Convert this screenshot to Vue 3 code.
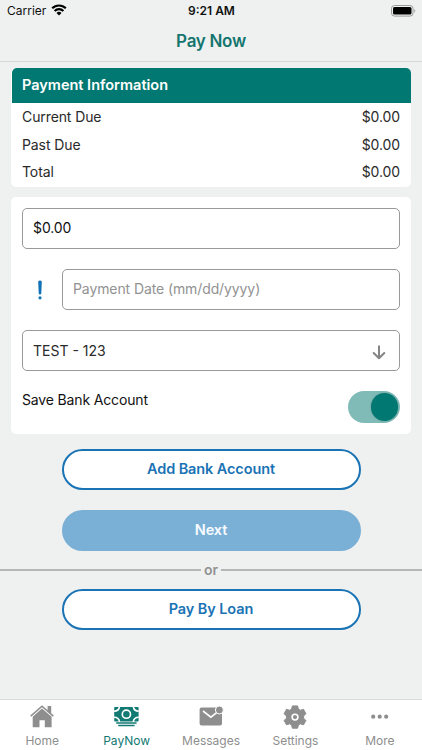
<template>
  <div class="screen">
    <div class="status-bar">
      <div class="carrier">
        <span>Carrier</span>
        <svg class="wifi" viewBox="0 0 16 12">
          <path d="M1.2 4.3a9.6 9.6 0 0 1 13.6 0" />
          <path d="M3.6 6.9a6.2 6.2 0 0 1 8.8 0" />
          <path class="wifi-dot" d="M8 11.5 5.5 8.9a3.6 3.6 0 0 1 5 0z" />
        </svg>
      </div>
      <span class="clock">9:21 AM</span>
      <svg class="battery" viewBox="0 0 25 12">
        <rect class="battery-case" x=".5" y=".5" width="21.5" height="10.6" rx="3" />
        <rect x="2" y="2" width="18.5" height="7.6" rx="1.5" />
        <path class="battery-tip" d="M23.3 4v3.7c1.3-.5 1.3-3.2 0-3.7z" />
      </svg>
    </div>

    <header class="title-bar">
      <h1>Pay Now</h1>
    </header>

    <main class="content">
      <section class="card summary">
        <h2>Payment Information</h2>
        <div v-for="item in summary" :key="item.label" class="summary-row">
          <span>{{ item.label }}</span>
          <span>{{ item.amount }}</span>
        </div>
      </section>

      <section class="card form">
        <input v-model="amount" class="field" type="text" />
        <div class="date-row">
          <svg class="alert" viewBox="0 0 6 20">
            <path d="M1.2 2A1.5 1.5 0 0 1 2.7.4h.6A1.5 1.5 0 0 1 4.8 2l-.5 11.2a1.3 1.3 0 0 1-2.6 0z" />
            <circle cx="3" cy="17.8" r="1.6" />
          </svg>
          <input v-model="date" class="field" type="text" placeholder="Payment Date (mm/dd/yyyy)" />
        </div>
        <button type="button" class="field account">
          <span>TEST - 123</span>
          <svg class="arrow" viewBox="0 0 14 15">
            <path d="M7 1.2v12M1.7 8 7 13.3 12.3 8" />
          </svg>
        </button>
        <div class="save-row">
          <span>Save Bank Account</span>
          <button type="button" class="toggle" :class="{ on: saveAccount }" @click="saveAccount = !saveAccount">
            <span class="knob"></span>
          </button>
        </div>
      </section>

      <div class="actions">
        <button type="button" class="btn">Add Bank Account</button>
        <button type="button" class="btn btn-next">Next</button>
        <div class="divider"><span>or</span></div>
        <button type="button" class="btn">Pay By Loan</button>
      </div>
    </main>

    <nav class="tab-bar">
      <button v-for="tab in tabs" :key="tab" type="button" class="tab" :class="{ active: tab === current }" @click="current = tab">
        <svg v-if="tab === 'Home'" class="tab-icon" viewBox="0 0 26 26">
          <path d="M13 5.5 22.6 13.8v10.5h-6.8v-7h-5.3v7H3.7V13.8z" />
          <path class="line" d="M1.7 13.2 13 3.2l11.3 10" />
          <path d="M18.6 2.9h3.6v8l-3.6-3z" />
        </svg>
        <svg v-else-if="tab === 'PayNow'" class="tab-icon" viewBox="0 0 26 26">
          <rect x=".2" y="3.9" width="24.4" height="14.6" rx=".8" />
          <circle class="cut" cx="12.4" cy="11.2" r="4.1" />
          <path class="cut" d="M0 8.2c3.1 0 5.2-1.6 5.5-4.8M24.8 8.2c-3.1 0-5.2-1.6-5.5-4.8M0 14.2c3.1 0 5.2 1.6 5.5 4.8M24.8 14.2c-3.1 0-5.2 1.6-5.5 4.8" />
          <path class="thin" d="M2.2 20h20.4M4.2 22.4h16.4" />
        </svg>
        <svg v-else-if="tab === 'Messages'" class="tab-icon" viewBox="0 0 26 26">
          <rect x="1.6" y="4.6" width="22.4" height="17.8" rx="2" />
          <path class="cut" d="m5 8 7.9 6.2 6.1-4.8" />
          <circle class="badge" cx="21.4" cy="7" r="4" />
        </svg>
        <svg v-else-if="tab === 'Settings'" class="tab-icon" viewBox="0 0 26 26">
          <path class="gear" d="M10.4 2.9h5.2l.8 3.2 2 1.2 3.1-1 2.4 4.4-2.3 2.3v2.2l2.3 2.3-2.4 4.3-3.1-1-2 1.3-.8 3.1h-5.2l-.8-3.1-2-1.3-3.1 1-2.4-4.3 2.3-2.3V13l-2.3-2.3 2.4-4.4 3.1 1 2-1.2z" />
          <circle class="cut" cx="13" cy="14.1" r="2.9" />
        </svg>
        <svg v-else class="tab-icon" viewBox="0 0 26 26">
          <circle cx="6.2" cy="13.7" r="2.1" />
          <circle cx="12.7" cy="13.7" r="2.1" />
          <circle cx="19.2" cy="13.7" r="2.1" />
        </svg>
        <span>{{ tab }}</span>
      </button>
    </nav>
  </div>
</template>

<script setup>
import { ref } from "vue";

const summary = [
  { label: "Current Due", amount: "$0.00" },
  { label: "Past Due", amount: "$0.00" },
  { label: "Total", amount: "$0.00" },
];
const tabs = ["Home", "PayNow", "Messages", "Settings", "More"];

const amount = ref("$0.00");
const date = ref("");
const saveAccount = ref(true);
const current = ref("PayNow");
</script>

<style>
body {
  margin: 0;
  background: #eff1f1;
}
</style>

<style scoped>
.screen {
  display: flex;
  flex-direction: column;
  width: 422px;
  height: 750px;
  overflow: hidden;
  background: #eff1f1;
  color: #2a2a2a;
  font-family: Inter, "Liberation Sans", sans-serif;
  font-size: 14px;
  letter-spacing: -.1px;
}

.screen * {
  box-sizing: border-box;
}

button,
input {
  margin: 0;
  padding: 0;
  border: 0;
  background: none;
  font: inherit;
  letter-spacing: inherit;
  color: inherit;
}

.status-bar {
  display: grid;
  grid-template-columns: 1fr auto 1fr;
  align-items: center;
  height: 22px;
  padding: 0 6px 1px 7px;
  color: #111;
  font-size: 12px;
  letter-spacing: 0;
}

.carrier {
  display: flex;
  align-items: center;
  gap: 5px;
}

.wifi {
  width: 16px;
  height: 12px;
  margin-top: -1px;
  fill: none;
  stroke: #000;
  stroke-width: 2.2;
}

.wifi-dot {
  fill: #000;
  stroke: none;
}

.clock {
  font-weight: 600;
}

.battery {
  justify-self: end;
  width: 25px;
  height: 12px;
}

.battery-case {
  fill: none;
  stroke: #999;
}

.battery-tip {
  fill: #999;
}

.title-bar {
  display: flex;
  align-items: center;
  justify-content: center;
  height: 40px;
  padding-bottom: 1px;
  border-bottom: 1px solid #d6d8d8;
}

h1 {
  margin: 0;
  color: #14766f;
  font-size: 17px;
  font-weight: 600;
  letter-spacing: -.3px;
}

.content {
  flex: 1;
  padding: 5.5px 11px 0;
}

.card {
  border-radius: 5px;
  background: #fff;
}

.summary {
  height: 119px;
  margin-bottom: 10.5px;
}

h2 {
  display: flex;
  align-items: center;
  height: 35.5px;
  margin: 0 0 0 .5px;
  padding: 0 0 2px 10.5px;
  border-radius: 5px 5px 0 0;
  background: #027872;
  color: #fff;
  font-size: 14.5px;
  font-weight: 600;
  letter-spacing: 0;
}

.summary-row {
  display: flex;
  align-items: center;
  justify-content: space-between;
  height: 27.5px;
  padding: 0 11px;
}

.form {
  display: flex;
  flex-direction: column;
  gap: 20px;
  height: 237px;
  padding: 11px;
}

.field {
  flex: none;
  width: 100%;
  height: 41px;
  padding: 0 10px 2px;
  border: 1px solid #999;
  border-radius: 5px;
  color: #111;
}

.field::placeholder {
  color: #929292;
  opacity: 1;
}

.date-row {
  display: flex;
  align-items: center;
}

.date-row .field {
  flex: 1;
  width: auto;
}

.alert {
  width: 6px;
  height: 20px;
  margin: 0 19.5px 0 14.5px;
  fill: #1272b6;
}

.account {
  display: flex;
  align-items: center;
  justify-content: space-between;
  padding-right: 13px;
  padding-bottom: 0;
  color: #2a2a2a;
  letter-spacing: 0;
}

.arrow {
  width: 14px;
  height: 15px;
  margin-top: 4px;
  fill: none;
  stroke: #858585;
  stroke-width: 2;
  stroke-linecap: round;
  stroke-linejoin: round;
}

.save-row {
  display: flex;
  justify-content: space-between;
  color: #111;
  line-height: 18px;
  letter-spacing: -.15px;
}

.toggle {
  display: flex;
  align-items: center;
  width: 52px;
  height: 32px;
  padding: 0 2px;
  border-radius: 16px;
  background: #ccc;
}

.toggle.on {
  justify-content: flex-end;
  background: #80bbb8;
}

.knob {
  width: 27.5px;
  height: 27.5px;
  border-radius: 50%;
  background: #fff;
  box-shadow: 0 0 2px rgba(0, 0, 0, .2);
}

.toggle.on .knob {
  background: #027872;
}

.actions {
  display: flex;
  flex-direction: column;
  align-items: center;
  margin: 15px -11px 0;
}

.btn {
  width: 299px;
  height: 41px;
  padding-bottom: 2px;
  border: 2px solid #1a73b4;
  border-radius: 21px;
  background: #fff;
  color: #1a73b4;
  font-size: 14.5px;
  font-weight: 600;
}

.btn-next {
  margin-top: 20px;
  border-color: #7bb0d6;
  background: #7bb0d6;
  color: #f7fbff;
}

.divider {
  display: flex;
  align-items: center;
  gap: 3.5px;
  width: 100%;
  height: 38px;
  color: #929292;
  font-weight: 600;
}

.divider span {
  padding-bottom: 2px;
}

.divider::before,
.divider::after {
  content: "";
  flex: 1;
  height: 2px;
  background: #b5b7b7;
}

.tab-bar {
  display: flex;
  height: 51px;
  border-top: 1px solid #d9dada;
  background: #fff;
}

.tab {
  --tint: #8e8e8e;
  display: flex;
  flex: 1;
  flex-direction: column;
  align-items: center;
  gap: 4px;
  padding-top: 3px;
  color: var(--tint);
  font-size: 12px;
  letter-spacing: 0;
  line-height: 15px;
}

.tab.active {
  --tint: #137a73;
}

.tab-icon {
  width: 26px;
  height: 26px;
  fill: var(--tint);
}

.line {
  fill: none;
  stroke: var(--tint);
  stroke-width: 1.6;
}

.thin {
  fill: none;
  stroke: var(--tint);
  stroke-width: 1.5;
}

.cut {
  fill: none;
  stroke: #fff;
  stroke-width: 1.6;
}

.badge {
  stroke: #fff;
  stroke-width: 1;
}

.gear {
  stroke: var(--tint);
  stroke-linejoin: round;
}
</style>
